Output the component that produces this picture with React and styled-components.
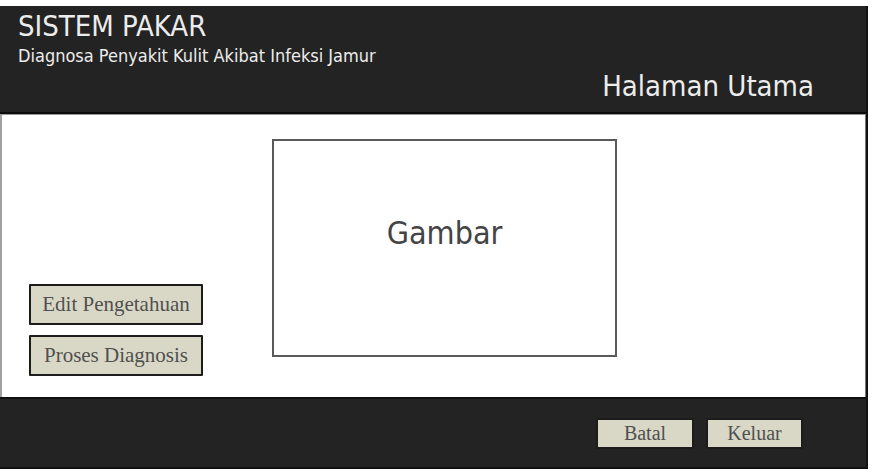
import React from 'react'
import styled, { createGlobalStyle } from 'styled-components'

const GlobalStyle = createGlobalStyle`
  body {
    margin: 0;
    background: #fff;
    font-family: "DejaVu Sans Condensed", "DejaVu Sans", sans-serif;
  }
`

const Frame = styled.div`
  margin-top: 6px;
  width: 868px;
  border-right: 2px solid #111;
  border-bottom: 2px solid #111;
  box-sizing: border-box;
`

const Header = styled.header`
  height: 108px;
  background: #232323;
  border-bottom: 2px solid #0c0c0c;
  box-sizing: border-box;
  padding: 4px 52px 0 18px;
  display: flex;
  flex-direction: column;
  color: #ececec;
`

const Title = styled.h1`
  margin: 0;
  font-size: 29px;
  font-weight: normal;
  line-height: 32px;
`

const Subtitle = styled.div`
  margin-top: 4px;
  font-size: 18px;
  line-height: 20px;
`

const PageName = styled.div`
  align-self: flex-end;
  margin-top: 4px;
  font-size: 29px;
  line-height: 32px;
`

const Content = styled.main`
  height: 283px;
  background: #fff;
  border-top: 1px solid #9a9a9a;
  border-left: 2px solid #a0a0a0;
  border-right: 1px solid #777;
  box-sizing: border-box;
  display: grid;
  grid-template-columns: 174px 345px;
  column-gap: 69px;
  padding: 0 0 21px 27px;
`

const Menu = styled.nav`
  align-self: end;
  display: flex;
  flex-direction: column;
  gap: 10px;
`

const Button = styled.button`
  width: ${p => p.$w}px;
  height: ${p => p.$h}px;
  padding: 0;
  background: #d9d8c6;
  border: 2px solid #1c1c1c;
  border-radius: 1px;
  color: #505050;
  font-family: "Liberation Serif", "Times New Roman", serif;
  font-size: ${p => p.$size}px;
  cursor: pointer;
`

const Picture = styled.div`
  margin-top: 24px;
  height: 218px;
  border: 2px solid #5a5a5a;
  box-sizing: border-box;
  display: flex;
  justify-content: center;
  padding-top: 74px;
  color: #444;
  font-size: 32px;
  line-height: 36px;
`

const Footer = styled.footer`
  height: 70px;
  background: #232323;
  border-top: 2px solid #111;
  box-sizing: border-box;
  display: flex;
  justify-content: flex-end;
  align-items: flex-start;
  gap: 12px;
  padding: 19px 63px 0 0;
`

export default function App() {
  return (
    <>
      <GlobalStyle />
      <Frame>
        <Header>
          <Title>SISTEM PAKAR</Title>
          <Subtitle>Diagnosa Penyakit Kulit Akibat Infeksi Jamur</Subtitle>
          <PageName>Halaman Utama</PageName>
        </Header>
        <Content>
          <Menu>
            <Button $w={174} $h={41} $size={21}>Edit Pengetahuan</Button>
            <Button $w={174} $h={41} $size={21}>Proses Diagnosis</Button>
          </Menu>
          <Picture>Gambar</Picture>
        </Content>
        <Footer>
          <Button $w={98} $h={31} $size={20}>Batal</Button>
          <Button $w={97} $h={31} $size={20}>Keluar</Button>
        </Footer>
      </Frame>
    </>
  )
}
